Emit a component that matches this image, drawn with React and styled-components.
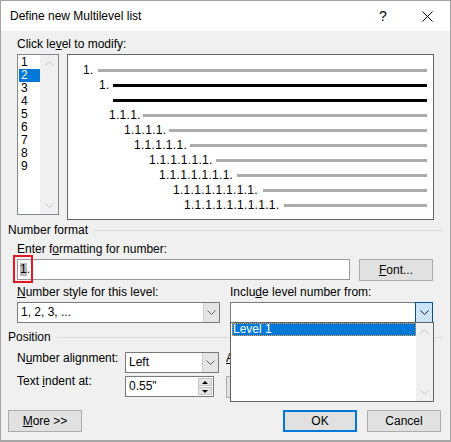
import React from "react";
import styled, { createGlobalStyle } from "styled-components";

const Global = createGlobalStyle`
  html, body { margin: 0; padding: 0; background: #fff; }
  body {
    font-family: "Liberation Sans", Arial, sans-serif;
    font-size: 12px;
    color: #000;
  }
  * { box-sizing: border-box; }
`;

const Window = styled.div`
  position: relative;
  width: 451px;
  height: 442px;
  border: 1px solid #a5a5a5;
  border-bottom-width: 2px;
  background: #f0f0f0;
  display: flex;
  flex-direction: column;
`;

const TitleBar = styled.div`
  flex: none;
  height: 30px;
  background: #fff;
  display: flex;
  align-items: center;
  padding-left: 9px;
`;

const TitleText = styled.div`
  flex: 1;
  line-height: 15px;
  padding-top: 1px;
`;

const HelpMark = styled.span`
  width: 8px;
  margin-right: 35px;
  font-size: 14px;
  line-height: 15px;
  padding-top: 1px;
`;

const CloseIcon = styled.svg`
  width: 11px;
  height: 11px;
  margin-right: 17px;
  margin-top: 1px;
`;

const Body = styled.div`
  flex: 1;
  display: flex;
  flex-direction: column;
  padding: 0 7px;
`;

const Key = styled.span`
  text-decoration: underline;
  text-underline-offset: 1px;
`;

const TopLabel = styled.div`
  margin-top: 6px;
  padding-left: 9px;
  line-height: 15px;
`;

const TopRow = styled.div`
  display: flex;
  gap: 8px;
  margin-top: 2px;
  padding-left: 9px;
`;

const LevelList = styled.div`
  width: 42px;
  height: 161px;
  border: 1px solid #828790;
  background: #fff;
  display: flex;
`;

const LevelItems = styled.div`
  width: 22px;
  padding: 1px 0 0 1px;
`;

const LevelItem = styled.div`
  height: 13px;
  line-height: 13px;
  padding-left: 2px;
  background: ${(p) => (p.$selected ? "#0078d7" : "transparent")};
  color: ${(p) => (p.$selected ? "#fff" : "#000")};
`;

const ScrollTrack = styled.div`
  flex: ${(p) => (p.$width ? "none" : "1")};
  width: ${(p) => (p.$width ? `${p.$width}px` : "auto")};
  background: #f0f0f0;
  display: flex;
  flex-direction: column;
  justify-content: space-between;
`;

const ScrollBtn = styled.div`
  height: 17px;
  display: flex;
  align-items: center;
  justify-content: center;
`;

const ChevronSvg = styled.svg`
  width: 9px;
  height: 5px;
  display: block;
`;

const Chevron = ({ dir = "down", color = "#606060" }) => (
  <ChevronSvg viewBox="0 0 9 5">
    <polyline
      points={dir === "up" ? "0.5,4.5 4.5,0.5 8.5,4.5" : "0.5,0.5 4.5,4.5 8.5,0.5"}
      fill="none"
      stroke={color}
      strokeWidth="1"
    />
  </ChevronSvg>
);

const Preview = styled.div`
  width: 367px;
  height: 166px;
  border: 1px solid #646464;
  background: #fff;
  padding: 8px 6px 0 0;
`;

const PreviewRow = styled.div`
  height: 15px;
  display: flex;
  align-items: center;
  padding-left: ${(p) => p.$indent}px;
`;

const NumLabel = styled.span`
  flex: none;
  width: ${(p) => p.$w}px;
  line-height: 15px;
  letter-spacing: 0.3px;
  white-space: nowrap;
  overflow: visible;
`;

const Bar = styled.div`
  flex: 1;
  height: 3px;
  background: ${(p) => (p.$dark ? "#000" : "#ababab")};
`;

const Legend = styled.div`
  display: flex;
  align-items: center;
  line-height: 15px;
  margin-top: ${(p) => p.$mt}px;
`;

const LegendRule = styled.div`
  flex: 1;
  height: 1px;
  background: #dcdcdc;
  margin-left: ${(p) => p.$gap}px;
`;

const GroupBody = styled.div`
  padding: 0 10px 0 9px;
`;

const FieldLabel = styled.div`
  line-height: 15px;
  margin-top: 4px;
`;

const FormatRow = styled.div`
  display: flex;
  align-items: flex-start;
  gap: 9px;
  margin-top: 2px;
`;

const TextBox = styled.div`
  position: relative;
  flex: 1;
  height: 21px;
  border: 1px solid #999;
  background: #fff;
  padding-left: 2px;
  display: flex;
  align-items: center;
  line-height: 13px;
`;

const Selected = styled.span`
  background: #b9b9b9;
`;

const CalloutFrame = styled.div`
  position: absolute;
  left: -5px;
  top: -5px;
  width: 20px;
  height: 28px;
  border: 2px solid #e3191f;
  pointer-events: none;
`;

const Button = styled.div`
  flex: none;
  width: ${(p) => p.$w || 74}px;
  height: 22px;
  display: flex;
  align-items: center;
  justify-content: center;
  background: #e1e1e1;
  border: ${(p) => (p.$default ? "2px solid #0078d7" : "1px solid #adadad")};
  line-height: 15px;
  white-space: nowrap;
`;

const TwoCol = styled.div`
  display: grid;
  grid-template-columns: 203px 1fr;
  column-gap: 10px;
`;

const ComboBox = styled.div`
  position: relative;
  width: ${(p) => (p.$w ? `${p.$w}px` : "auto")};
  height: 21px;
  margin-top: 2px;
  border: 1px solid #7a7a7a;
  background: #fff;
  display: flex;
`;

const ComboText = styled.div`
  flex: 1;
  padding-left: 3px;
  line-height: 19px;
`;

const ComboArrow = styled.div`
  flex: none;
  display: flex;
  align-items: center;
  justify-content: center;
  width: ${(p) => (p.$active ? 18 : 16)}px;
  margin: ${(p) => (p.$active ? "-1px -1px -1px 0" : "0")};
  background: ${(p) => (p.$active ? "#cce4f7" : "#e5e5e5")};
  border: ${(p) => (p.$active ? "1px solid #005499" : "none")};
  border-left: 1px solid ${(p) => (p.$active ? "#005499" : "#cfcfcf")};
`;

const DropList = styled.div`
  position: absolute;
  z-index: 5;
  left: -1px;
  top: 100%;
  width: 204px;
  height: 80px;
  border: 1px solid #646464;
  background: #fff;
  display: flex;
`;

const DropItems = styled.div`
  flex: 1;
  padding-left: 1px;
`;

const DropItem = styled.div`
  height: 13px;
  line-height: 11px;
  border: 1px dotted #f5a142;
  background: #0078d7;
  color: #fff;
`;

const PosRow = styled.div`
  display: flex;
  align-items: flex-start;
  margin-top: ${(p) => p.$mt}px;
`;

const PosLabel = styled.div`
  flex: none;
  width: ${(p) => p.$w || 108}px;
  line-height: 15px;
  margin-top: ${(p) => p.$dy}px;
`;

const ControlSlot = styled.div`
  flex: none;
  width: 101px;
`;

const Spinner = styled.div`
  width: ${(p) => p.$w}px;
  height: 21px;
  border: 1px solid #7a7a7a;
  background: #fff;
  display: flex;
`;

const SpinText = styled.div`
  flex: 1;
  padding-left: 3px;
  line-height: 19px;
`;

const SpinButtons = styled.div`
  flex: none;
  width: 16px;
  display: flex;
  flex-direction: column;
  gap: 1px;
  padding: 1px;
  background: #fff;
`;

const SpinHalf = styled.div`
  flex: 1;
  display: flex;
  align-items: center;
  justify-content: center;
  background: #e5e5e5;
  border: 1px solid #c4c4c4;
`;

const Triangle = styled.div`
  width: 0;
  height: 0;
  border-left: 3px solid transparent;
  border-right: 3px solid transparent;
  ${(p) =>
    p.$up ? "border-bottom: 3px solid #000;" : "border-top: 3px solid #000;"}
`;

const Footer = styled.div`
  display: flex;
  gap: 10px;
  margin-top: 12px;
  padding-right: 2px;
`;

const Spacer = styled.div`
  flex: 1;
`;

const levels = [1, 2, 3, 4, 5, 6, 7, 8, 9];

const previewRows = [
  { indent: 15, w: 15, text: "1." },
  { indent: 31, w: 14, text: "1.", dark: true },
  { indent: 45, w: 0, text: "", dark: true },
  { indent: 41, w: 34, text: "1.1.1." },
  { indent: 56, w: 45, text: "1.1.1.1." },
  { indent: 66, w: 56, text: "1.1.1.1.1." },
  { indent: 81, w: 67, text: "1.1.1.1.1.1." },
  { indent: 91, w: 78, text: "1.1.1.1.1.1.1." },
  { indent: 105, w: 90, text: "1.1.1.1.1.1.1.1." },
  { indent: 116, w: 100, text: "1.1.1.1.1.1.1.1.1." },
];

export default function App() {
  return (
    <>
      <Global />
      <Window>
        <TitleBar>
          <TitleText>Define new Multilevel list</TitleText>
          <HelpMark>?</HelpMark>
          <CloseIcon viewBox="0 0 11 11">
            <path d="M0.5 0.5 L10.5 10.5 M10.5 0.5 L0.5 10.5" stroke="#000" strokeWidth="1" fill="none" />
          </CloseIcon>
        </TitleBar>

        <Body>
          <TopLabel>
            Click le<Key>v</Key>el to modify:
          </TopLabel>
          <TopRow>
            <LevelList>
              <LevelItems>
                {levels.map((n) => (
                  <LevelItem key={n} $selected={n === 2}>
                    {n}
                  </LevelItem>
                ))}
              </LevelItems>
              <ScrollTrack>
                <ScrollBtn>
                  <Chevron dir="up" color="#c2c2c2" />
                </ScrollBtn>
                <ScrollBtn>
                  <Chevron dir="down" color="#c2c2c2" />
                </ScrollBtn>
              </ScrollTrack>
            </LevelList>

            <Preview>
              {previewRows.map((r, i) => (
                <PreviewRow key={i} $indent={r.indent}>
                  <NumLabel $w={r.w}>{r.text}</NumLabel>
                  <Bar $dark={r.dark} />
                </PreviewRow>
              ))}
            </Preview>
          </TopRow>

          <Legend $mt={3}>
            Number format
            <LegendRule $gap={6} />
          </Legend>
          <GroupBody>
            <FieldLabel>
              Enter f<Key>o</Key>rmatting for number:
            </FieldLabel>
            <FormatRow>
              <TextBox>
                <Selected>1</Selected>.
                <CalloutFrame />
              </TextBox>
              <Button>
                <Key>F</Key>ont...
              </Button>
            </FormatRow>
            <TwoCol>
              <div>
                <FieldLabel>
                  <Key>N</Key>umber style for this level:
                </FieldLabel>
                <ComboBox>
                  <ComboText>1, 2, 3, ...</ComboText>
                  <ComboArrow>
                    <Chevron />
                  </ComboArrow>
                </ComboBox>
              </div>
              <div>
                <FieldLabel>
                  Inclu<Key>d</Key>e level number from:
                </FieldLabel>
                <ComboBox>
                  <ComboText />
                  <ComboArrow $active>
                    <Chevron color="#1a1a1a" />
                  </ComboArrow>
                  <DropList>
                    <DropItems>
                      <DropItem>Level 1</DropItem>
                    </DropItems>
                    <ScrollTrack $width={17}>
                      <ScrollBtn>
                        <Chevron dir="up" color="#c2c2c2" />
                      </ScrollBtn>
                      <ScrollBtn>
                        <Chevron dir="down" color="#c2c2c2" />
                      </ScrollBtn>
                    </ScrollTrack>
                  </DropList>
                </ComboBox>
              </div>
            </TwoCol>
          </GroupBody>

          <Legend $mt={7}>
            Position
            <LegendRule $gap={6} />
          </Legend>
          <GroupBody>
            <PosRow $mt={7}>
              <PosLabel $dy={-1}>
                N<Key>u</Key>mber alignment:
              </PosLabel>
              <ControlSlot>
                <ComboBox $w={94} style={{ marginTop: 0 }}>
                  <ComboText>Left</ComboText>
                  <ComboArrow>
                    <Chevron />
                  </ComboArrow>
                </ComboBox>
              </ControlSlot>
              <PosLabel $dy={-1} $w={70}>
                <Key>A</Key>ligned at:
              </PosLabel>
              <Spinner $w={80}>
                <SpinText>0.25"</SpinText>
                <SpinButtons>
                  <SpinHalf>
                    <Triangle $up />
                  </SpinHalf>
                  <SpinHalf>
                    <Triangle />
                  </SpinHalf>
                </SpinButtons>
              </Spinner>
            </PosRow>
            <PosRow $mt={3}>
              <PosLabel $dy={-2}>
                Text <Key>i</Key>ndent at:
              </PosLabel>
              <ControlSlot>
                <Spinner $w={89}>
                  <SpinText>0.55"</SpinText>
                  <SpinButtons>
                    <SpinHalf>
                      <Triangle $up />
                    </SpinHalf>
                    <SpinHalf>
                      <Triangle />
                    </SpinHalf>
                  </SpinButtons>
                </Spinner>
              </ControlSlot>
              <Button $w={120}>
                <Key>S</Key>et for All Levels...
              </Button>
            </PosRow>
          </GroupBody>

          <Footer>
            <Button>
              <Key>M</Key>ore &gt;&gt;
            </Button>
            <Spacer />
            <Button $default>OK</Button>
            <Button>Cancel</Button>
          </Footer>
        </Body>
      </Window>
    </>
  );
}
